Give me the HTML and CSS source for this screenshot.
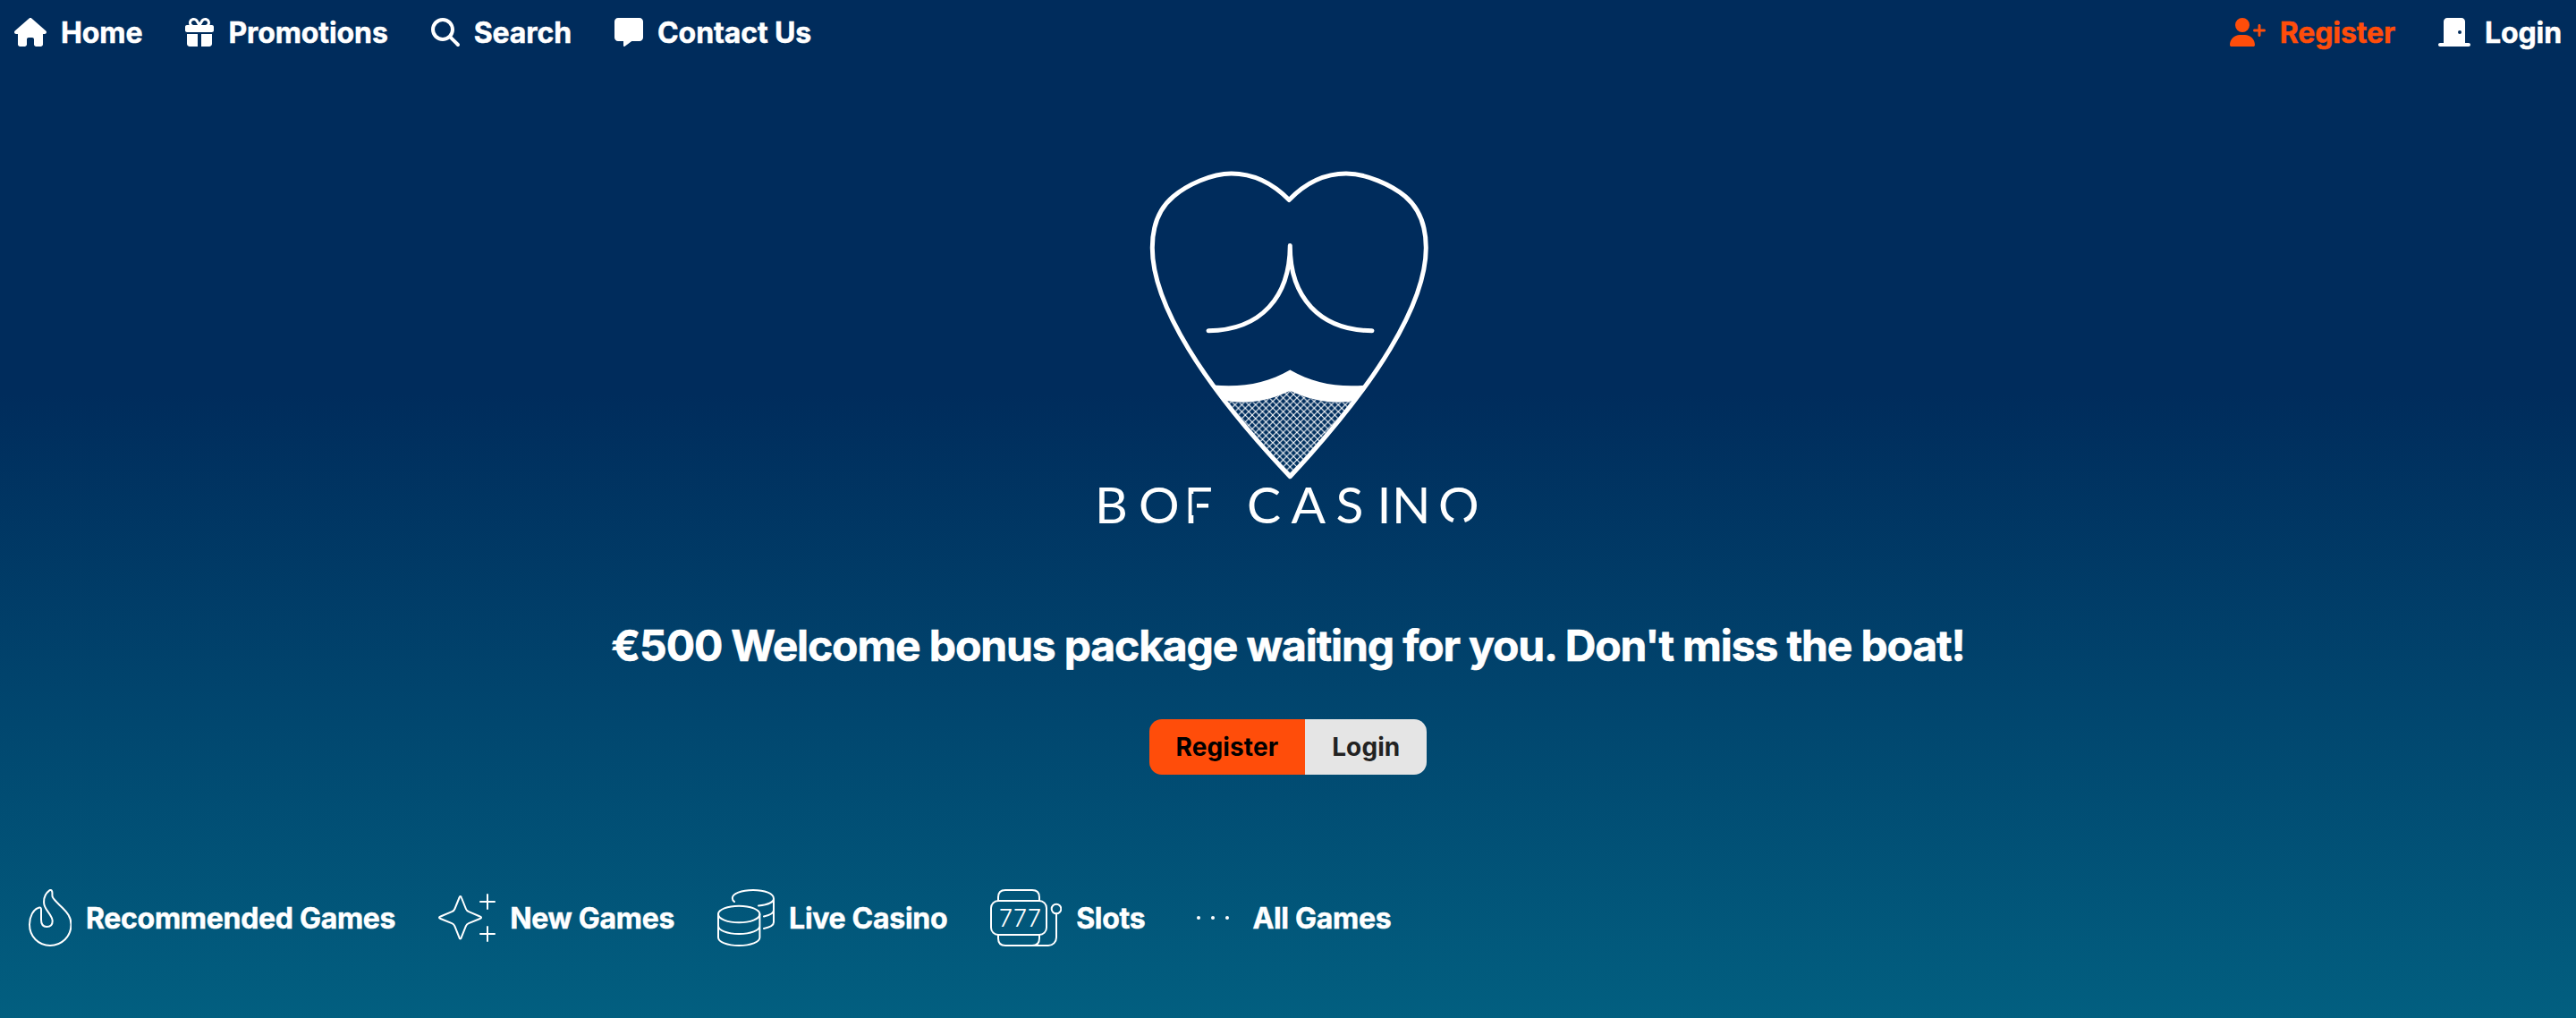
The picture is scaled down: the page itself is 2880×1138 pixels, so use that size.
FILE: index.html
```html
<!DOCTYPE html>
<html lang="en">
<head>
    <meta charset="UTF-8">
    <meta name="viewport" content="width=device-width, initial-scale=1.0">
    <title>BOF Casino</title>
    <link rel="stylesheet" href="styles.css">
</head>
<body>
    <header class="topbar">
        <nav class="nav">
            <a href="#" class="nav-link">
                <svg class="icon" width="36" height="32" viewBox="0 0 576 512"><path d="M575.8 255.500c0 18-15 32.100-32 32.100h-32l.7 160.200c0 2.700-.2 5.400-.5 8.100V472c0 22.100-17.900 40-40 40H392c-22.100 0-40-17.900-40-40v-88c0-17.700-14.300-32-32-32h-64c-17.700 0-32 14.300-32 32v88c0 22.100-17.900 40-40 40h-80c-22.100 0-40-17.900-40-40V287.600H32c-18 0-32-14-32-32.100 0-9 3-17 10-24L266.400 8c7-7 15-8 22-8s15 2 21 7l255.400 224.500c8 7 12 15 11 24z"/></svg>
                <span>Home</span>
            </a>
            <a href="#" class="nav-link">
                <svg class="icon" width="32" height="32" viewBox="0 0 512 512"><path d="M190.500 68.800L225.300 128H152c-22.100 0-40-17.900-40-40s17.900-40 40-40h2.200c14.900 0 28.800 7.900 36.300 20.800zM64 88c0 14.400 3.500 28 9.600 40H32c-17.700 0-32 14.300-32 32v64c0 17.700 14.300 32 32 32h448c17.700 0 32-14.300 32-32v-64c0-17.700-14.300-32-32-32h-41.600c6.100-12 9.600-25.600 9.600-40 0-48.600-39.400-88-88-88h-2.200c-31.900 0-61.500 16.900-77.700 44.400L256 85.500l-24.100-41C215.700 16.900 186.100 0 154.200 0H152C103.400 0 64 39.400 64 88zm336 0c0 22.100-17.900 40-40 40h-73.300l34.800-59.200C329.100 55.900 342.900 48 357.800 48h2.200c22.100 0 40 17.900 40 40zM32 288v176c0 26.500 21.500 48 48 48h144V288zm256 224h144c26.500 0 48-21.500 48-48V288H288z"/></svg>
                <span>Promotions</span>
            </a>
            <a href="#" class="nav-link">
                <svg class="icon" width="32" height="32" viewBox="0 0 512 512"><path d="M416 208c0 45.900-14.900 88.300-40 122.700l126.600 126.700c12.500 12.500 12.500 32.800 0 45.300s-32.800 12.500-45.300 0L330.700 376c-34.400 25.200-76.800 40-122.700 40C93.100 416 0 322.900 0 208S93.100 0 208 0s208 93.100 208 208zM208 352a144 144 0 1 0 0-288 144 144 0 1 0 0 288z"/></svg>
                <span>Search</span>
            </a>
            <a href="#" class="nav-link">
                <svg class="icon" width="32" height="32" viewBox="0 0 512 512"><path d="M64 0C28.700 0 0 28.700 0 64v288c0 35.300 28.700 64 64 64h96v80c0 6.100 3.400 11.600 8.800 14.300s11.900 2.100 16.800-1.500L309.300 416H448c35.300 0 64-28.700 64-64V64c0-35.300-28.700-64-64-64H64z"/></svg>
                <span>Contact Us</span>
            </a>
        </nav>
        <nav class="nav">
            <a href="#" class="nav-link nav-register">
                <svg class="icon" width="40" height="32" viewBox="0 0 640 512"><path d="M96 128a128 128 0 1 1 256 0 128 128 0 1 1-256 0zM0 482.300C0 383.800 79.800 304 178.300 304h91.400C368.200 304 448 383.800 448 482.300c0 16.400-13.300 29.700-29.700 29.700H29.700C13.300 512 0 498.700 0 482.300zM504 312v-64h-64c-13.300 0-24-10.700-24-24s10.700-24 24-24h64v-64c0-13.300 10.700-24 24-24s24 10.700 24 24v64h64c13.300 0 24 10.700 24 24s-10.700 24-24 24h-64v64c0 13.300-10.700 24-24 24s-24-10.700-24-24z"/></svg>
                <span>Register</span>
            </a>
            <a href="#" class="nav-link">
                <svg class="icon" width="36" height="32" viewBox="0 0 576 512"><path d="M96 64c0-35.300 28.700-64 64-64h256c35.300 0 64 28.700 64 64v384h64c17.700 0 32 14.300 32 32s-14.300 32-32 32H32c-17.700 0-32-14.300-32-32s14.300-32 32-32h64V64zm288 224a32 32 0 1 0 0-64 32 32 0 1 0 0 64z"/></svg>
                <span>Login</span>
            </a>
        </nav>
    </header>

    <main class="hero">
        <svg class="logo" width="440" height="420" viewBox="0 0 440 420">
            <defs>
                <pattern id="fishnet" width="7.700" height="7.700" patternUnits="userSpaceOnUse" x="222.300" y="3">
                    <path d="M0 0l7.700 7.700M7.700 0L0 7.700" stroke="#fff" stroke-width="1.100"/>
                </pattern>
                <!-- openings in the F and the last O -->
                <mask id="cuts" maskUnits="userSpaceOnUse" x="0" y="350" width="440" height="70">
                    <rect x="0" y="350" width="440" height="70" fill="#fff"/>
                    <rect x="112.500" y="372" width="5.500" height="24" fill="#000"/>
                    <path d="M411 384l-9 26h18z" fill="#000"/>
                </mask>
            </defs>
            <path d="M151.700 268c24 5 48 0 70.600-12 22 12 46 17 69.700 12L222.300 352z" fill="url(#fishnet)"/>
            <path d="M136.500 250.500c32 3 60-2 85.800-17 26 15 54 20 85.700 17l-14 17.800c-26 4-49-1-71.700-11.600-22 10.600-45 15.600-70.600 11.600z" fill="#fff"/>
            <g fill="none" stroke="#fff" stroke-width="5" stroke-linecap="round">
                <path stroke-linejoin="round" d="M221.200 43.500C201 23 178 14 156.700 14 134 14 107 27 92 39.500 74.500 54 68.300 76 68.300 97c0 63 56.700 153 154 255.700C318 250 374.300 160 374.300 97c0-21-6.300-43-23.300-57.500C336 27 308 14 285 14c-21 0-44 9-63.800 29.500z"/>
                <path d="M222.300 94.500C222 152 190 189 131 189.800M222.300 94.500C222 152 255 189 314 189.800"/>
            </g>
            <text class="wordmark" mask="url(#cuts)" y="405" x="4 53 103.500 151 174 223.500 273.500 319.500 336 388">BOF CASINO</text>
        </svg>
        <h1 class="hero-title">€500 Welcome bonus package waiting for you. Don't miss the boat!</h1>
        <div class="btn-group">
            <a href="#" class="btn btn-register">Register</a>
            <a href="#" class="btn btn-login">Login</a>
        </div>
    </main>

    <nav class="categories">
        <a href="#" class="category">
            <svg class="cat-icon" width="48" height="64" viewBox="0 0 48 64"><path d="M12 20.500C5 22 1 31 1 39.500 1 53 11 63 24 63s23.500-10 23.500-23.500C47.500 31 43 26 38 21 34 17 28 12 26.700 8.700 26 6 27 4 26 2c-.6-1.300-1.800-1.400-3-.4-4.500 3.400-6.300 9-5.800 14.400.5 7 9.500 13 9.500 19.500 0 4.500-3 6.500-6.500 6.500-4 0-6.200-3-6.200-8V23c0-1.800-.6-2.700-2-2.500z"/></svg>
            <span>Recommended Games</span>
        </a>
        <a href="#" class="category">
            <svg class="cat-icon" width="64" height="64" viewBox="0 0 64 64"><path d="M23.500 9.500c.5-2 1.900-2 2.400 0l5 12.500c.7 1.700 1.500 2.500 3.200 3.200l12.500 5.300c2 .7 2 1.800 0 2.500L34 38.200c-1.700.7-2.500 1.500-3.200 3.200l-5 12.500c-.5 2-1.900 2-2.400 0l-5-12.500c-.7-1.700-1.500-2.500-3.200-3.200L2.500 33c-2-.7-2-1.800 0-2.500l12.700-5.300c1.700-.7 2.500-1.500 3.200-3.200zM55 6v16M47 14h16M55 42v16M47 50h16"/></svg>
            <span>New Games</span>
        </a>
        <a href="#" class="category">
            <svg class="cat-icon" width="64" height="64" viewBox="0 0 64 64"><ellipse cx="24.200" cy="28" rx="23.200" ry="9.300"/><path d="M1 28v26c0 5 10 9 23.200 9s23.200-4 23.200-9V28M1 41c0 5 10 9 23.200 9s23.200-4 23.200-9M19 14c-1.600-1.300-2.200-2.600-2.200-4 0-5 10-9 23.200-9s23 4 23 9.500c0 4-7 7-17 8M63 10.500V37c0 3-4 5.500-11 7M63 23.500c0 3-4 5.500-11 7"/></svg>
            <span>Live Casino</span>
        </a>
        <a href="#" class="category">
            <svg class="cat-icon" width="80" height="64" viewBox="0 0 80 64">
                <rect x="1" y="13" width="62" height="38" rx="8"/>
                <path d="M9 13V9c0-5 3-8 8-8h30c5 0 8 3 8 8v4M9 51v4c0 5 3 8 8 8h48c5 0 9-4 9-9V27M55 51v4c0 5-3 8-8 8"/>
                <circle cx="74" cy="22" r="5.300"/>
                <text class="cat-digits" y="41.700" x="10 26 42">777</text>
            </svg>
            <span>Slots</span>
        </a>
        <a href="#" class="category">
            <svg class="cat-icon cat-dots" width="56" height="64" viewBox="0 0 56 64"><circle cx="12" cy="32" r="2"/><circle cx="28" cy="32" r="2"/><circle cx="44" cy="32" r="2"/></svg>
            <span>All Games</span>
        </a>
    </nav>
</body>
</html>
```

FILE: styles.css
```css
* {
    box-sizing: border-box;
}

body {
    margin: 0;
    height: 1138px;
    font-family: Inter, "Liberation Sans", sans-serif;
    font-weight: 700;
    color: #fff;
    background: linear-gradient(#002c5c 0, #002c5c 440px, #025f80 1138px);
    overflow: hidden;
}

a {
    color: inherit;
    text-decoration: none;
}

.topbar {
    display: flex;
    justify-content: space-between;
    height: 72px;
    padding: 0 16px;
}

.nav {
    display: flex;
    align-items: center;
    gap: 48px;
}

.nav-link {
    display: flex;
    align-items: center;
    gap: 16px;
    font-size: 32px;
    letter-spacing: -0.1px;
    -webkit-text-stroke: 0.5px;
}

.nav-register {
    color: #ff4d0a;
}

.icon {
    fill: currentColor;
}

.hero {
    display: flex;
    flex-direction: column;
    align-items: center;
    height: 890px;
    padding-top: 108px;
}

.logo {
    display: block;
}

.wordmark {
    font-family: Lato, sans-serif;
    font-weight: 400;
    font-size: 57px;
    fill: #fff;
}

.hero-title {
    margin: 92px 0 52px;
    font-size: 48px;
    line-height: 60px;
    letter-spacing: -1.13px;
    white-space: nowrap;
    -webkit-text-stroke: 0.6px;
}

.btn-group {
    display: flex;
    height: 62px;
    border-radius: 14px;
    overflow: hidden;
}

.btn {
    display: flex;
    align-items: center;
    padding: 0 30px;
    font-size: 28px;
    letter-spacing: 0.1px;
}

.btn-register {
    background: #ff4d0a;
    color: #000;
}

.btn-login {
    background: #e5e5e5;
    color: #222;
}

.categories {
    display: flex;
    align-items: center;
    gap: 48px;
    height: 128px;
    padding-left: 32px;
}

.category {
    display: flex;
    align-items: center;
    gap: 16px;
    font-size: 32px;
    letter-spacing: -0.3px;
}

.category span {
    -webkit-text-stroke: 0.5px;
}

.cat-icon {
    fill: none;
    stroke: #fff;
    stroke-width: 2;
    stroke-linecap: round;
    stroke-linejoin: round;
}

.cat-digits {
    font-size: 27px;
    font-weight: 300;
    fill: #fff;
    stroke: none;
}

.cat-dots {
    fill: #fff;
    stroke: none;
}
```
